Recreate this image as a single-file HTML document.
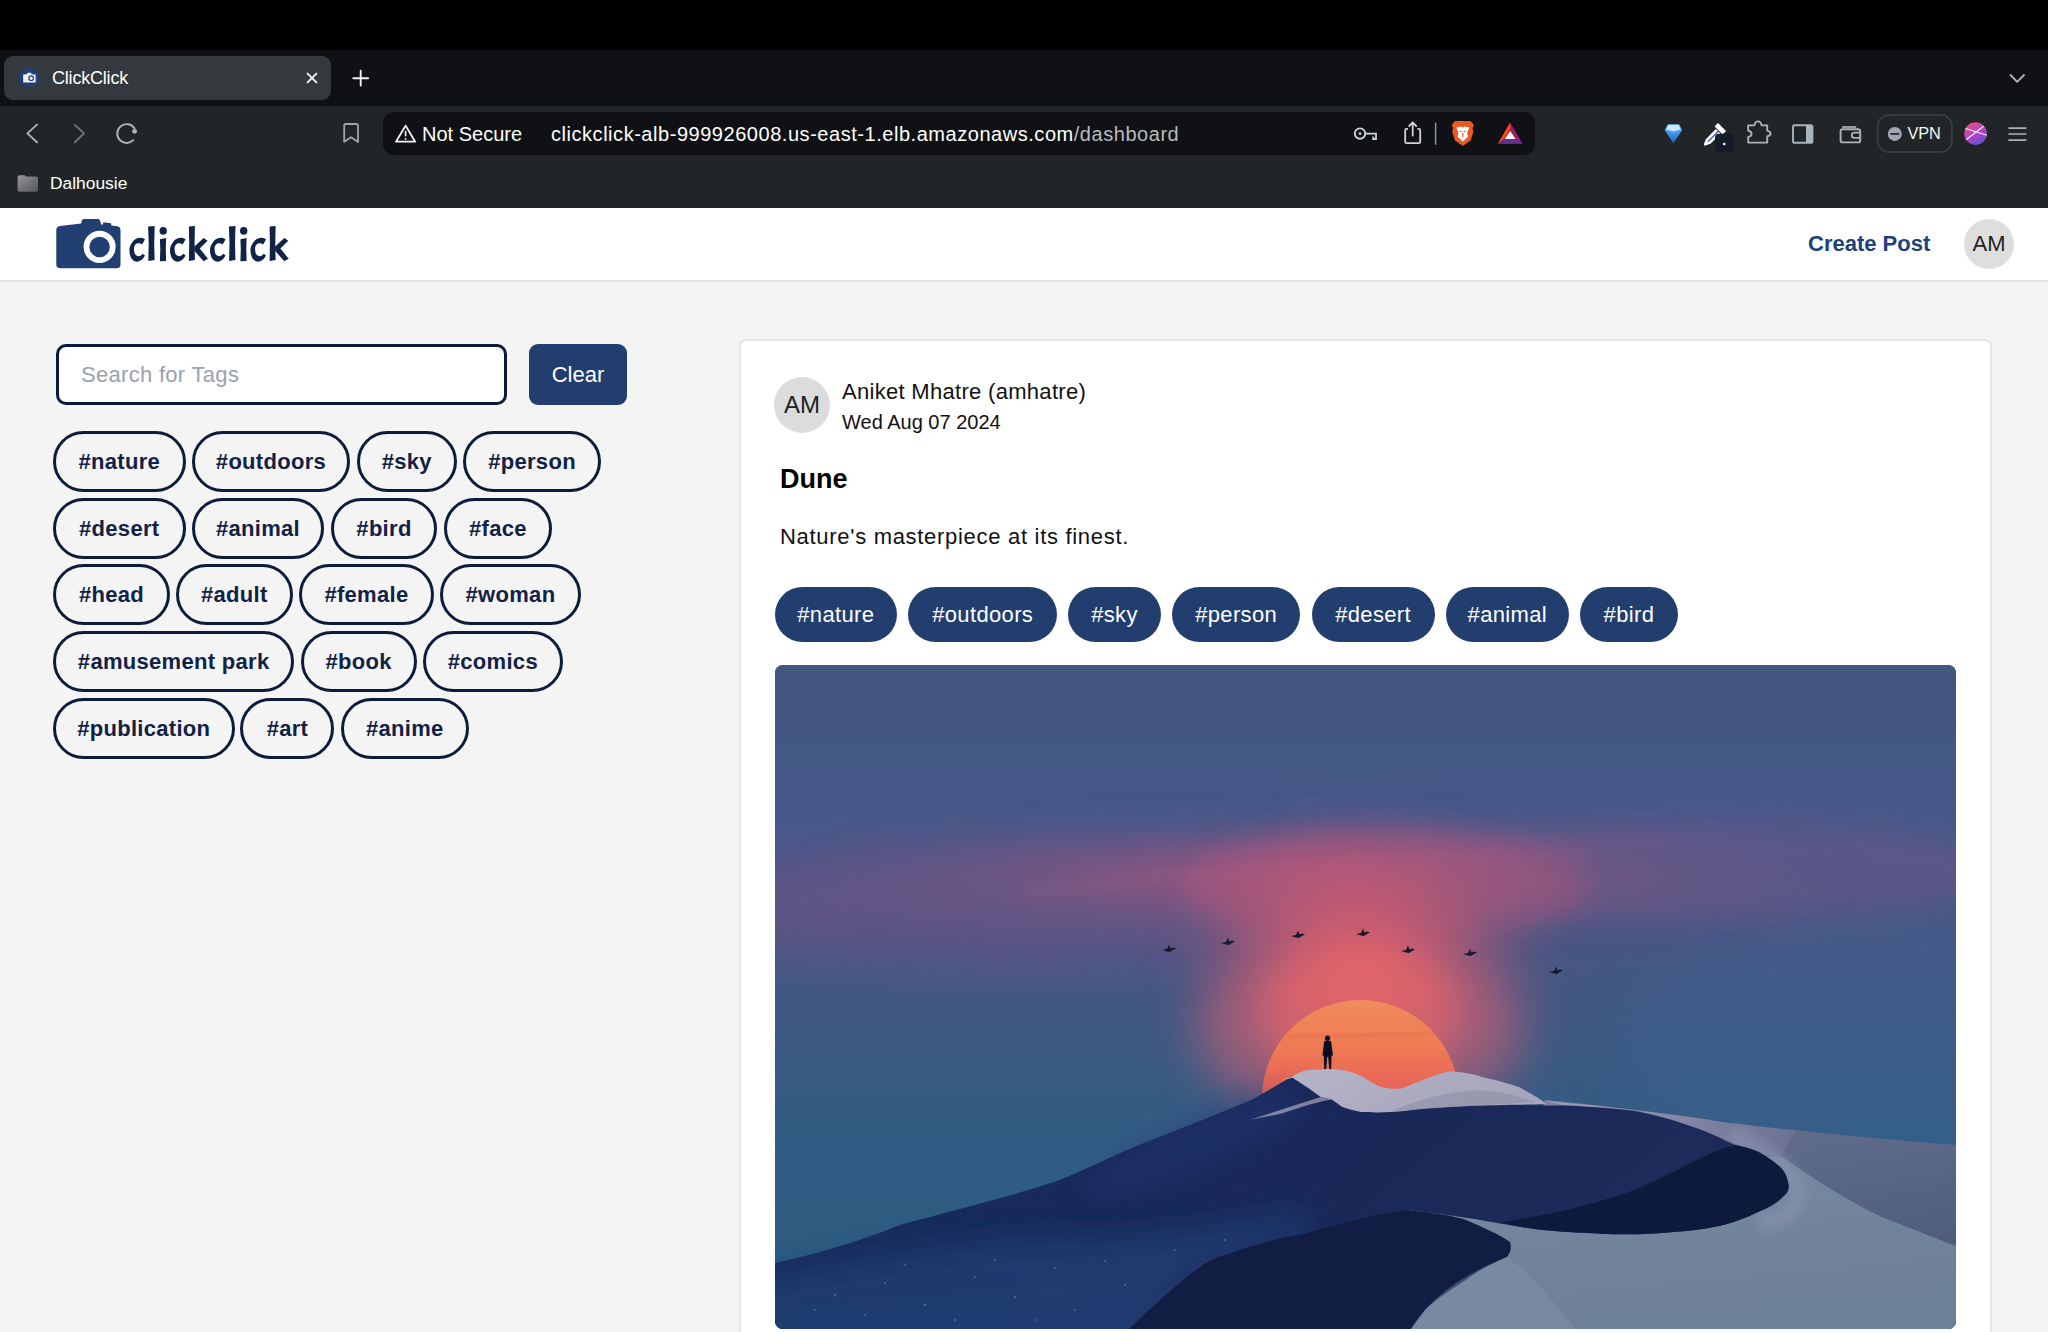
<!DOCTYPE html>
<html><head><meta charset="utf-8">
<style>
*{box-sizing:border-box;margin:0;padding:0}
html,body{width:2048px;height:1332px;overflow:hidden;background:#f4f4f4;font-family:"Liberation Sans",sans-serif}
.a{position:absolute}
#topblack{left:0;top:0;width:2048px;height:50px;background:#000}
#tabbar{left:0;top:50px;width:2048px;height:56px;background:#0f1115}
#tab{left:4px;top:56px;width:327px;height:44px;border-radius:9px;background:#33393c}
#toolbar{left:0;top:106px;width:2048px;height:102px;background:#212528}
#urlbar{left:383px;top:112px;width:1152px;height:43px;border-radius:11px;background:#0f1115}
.wt{color:#fff;white-space:pre}
#header{left:0;top:208px;width:2048px;height:72px;background:#fff}
#hborder{left:0;top:280px;width:2048px;height:2px;background:#e4e5e9}
.pill{position:absolute;height:61px;border:3px solid #0d1c3b;border-radius:31px;color:#112246;font-weight:bold;font-size:22px;line-height:55px;text-align:center;white-space:pre;letter-spacing:0.3px}
.ptag{position:absolute;top:587px;height:55px;border-radius:28px;background:#213e6f;color:#fff;font-size:22px;line-height:55px;text-align:center;white-space:pre;letter-spacing:0.35px}
</style></head><body>
<div class="a" id="topblack"></div>
<div class="a" id="tabbar"></div>
<div class="a" id="tab"></div>
<div class="a" id="toolbar"></div>
<div class="a" id="urlbar"></div>
<div class="a wt" style="left:52px;top:67px;font-size:18px;line-height:22px;letter-spacing:-0.2px">ClickClick</div>
<!-- url text -->
<div class="a wt" style="left:422px;top:123px;font-size:20px;line-height:23px;">Not Secure</div>
<div class="a wt" style="left:551px;top:123px;font-size:20px;line-height:23px;letter-spacing:0.54px">clickclick-alb-999926008.us-east-1.elb.amazonaws.com<span style="color:#b9bbbe">/dashboard</span></div>
<svg class="a" style="left:0;top:0" width="2048" height="208" viewBox="0 0 2048 208">
<defs>
<linearGradient id="fold" x1="0" y1="0" x2="1" y2="1"><stop offset="0" stop-color="#9a9a9e"/><stop offset="0.6" stop-color="#6e6e72"/><stop offset="1" stop-color="#58585c"/></linearGradient>
<linearGradient id="globe" x1="0.2" y1="0" x2="0.8" y2="1"><stop offset="0" stop-color="#ee4f7a"/><stop offset="0.5" stop-color="#b444c4"/><stop offset="1" stop-color="#5a52dc"/></linearGradient>
<linearGradient id="dia" x1="0" y1="0" x2="0" y2="1"><stop offset="0" stop-color="#6cc4ff"/><stop offset="1" stop-color="#1a5fd0"/></linearGradient>
</defs>
<!-- favicon -->
<circle cx="29.4" cy="77.8" r="10" fill="#213f74"/>
<path d="M23.2,74.5 L27,74.2 L27.6,72.8 L31,72.8 L31.6,74.2 L35.6,74.4 L35.6,82.6 L23.2,82.6 Z" fill="#eef2f6"/>
<circle cx="31.2" cy="78.2" r="2.3" fill="none" stroke="#213f74" stroke-width="1.2"/>
<!-- close x -->
<path d="M307.6,73.6 L316.4,82.4 M316.4,73.6 L307.6,82.4" stroke="#f2f2f2" stroke-width="1.9" stroke-linecap="round"/>
<!-- plus -->
<path d="M360.7,70.8 L360.7,85.6 M353.3,78.2 L368.1,78.2" stroke="#f2f2f2" stroke-width="1.9" stroke-linecap="round"/>
<!-- dropdown chevron -->
<path d="M2010.5,75 L2017.2,81.8 L2024,75" stroke="#aab4bc" stroke-width="1.9" fill="none" stroke-linecap="round" stroke-linejoin="round"/>
<!-- back / forward / reload -->
<path d="M37,124.6 L27.4,133.4 L37,142.3" stroke="#a9b3bb" stroke-width="1.9" fill="none" stroke-linecap="round" stroke-linejoin="round"/>
<path d="M74.8,124.9 L84,133.4 L74.8,142.3" stroke="#6d777f" stroke-width="1.9" fill="none" stroke-linecap="round" stroke-linejoin="round"/>
<path d="M133.3,140.2 A9.4,9.4 0 1,1 134.6,128.5" stroke="#a9b3bb" stroke-width="1.9" fill="none" stroke-linecap="round"/>
<circle cx="134.6" cy="131.3" r="2.4" fill="#a9b3bb"/>
<!-- bookmark -->
<path d="M344.2,141.8 L344.2,125.6 Q344.2,124 345.8,124 L356.4,124 Q358,124 358,125.6 L358,142 L351.1,137.2 Z" stroke="#9ba5ad" stroke-width="1.8" fill="none" stroke-linejoin="round"/>
<!-- warning triangle -->
<path d="M405.6,125.6 L415.2,141.7 L396,141.7 Z" stroke="#f4f4f4" stroke-width="1.8" fill="none" stroke-linejoin="round"/>
<path d="M405.6,131 L405.6,136.4" stroke="#f4f4f4" stroke-width="1.6"/>
<circle cx="405.6" cy="139" r="0.9" fill="#f4f4f4"/>
<!-- key -->
<circle cx="1360" cy="133.6" r="5.2" stroke="#cfd3d6" stroke-width="1.9" fill="none"/>
<circle cx="1360" cy="133.6" r="1.4" fill="#cfd3d6"/>
<path d="M1365.2,133.6 L1376,133.6 L1376,139 L1373.2,139 L1373.2,136.4" stroke="#cfd3d6" stroke-width="1.8" fill="none"/>
<!-- share -->
<path d="M1408,128.8 L1406.6,128.8 Q1405.2,128.8 1405.2,130.2 L1405.2,141.8 Q1405.2,143.2 1406.6,143.2 L1418.8,143.2 Q1420.2,143.2 1420.2,141.8 L1420.2,130.2 Q1420.2,128.8 1418.8,128.8 L1417.4,128.8" stroke="#cfd3d6" stroke-width="1.8" fill="none"/>
<path d="M1412.7,135.6 L1412.7,122.6 M1409.2,126 L1412.7,122.4 L1416.2,126" stroke="#cfd3d6" stroke-width="1.8" fill="none" stroke-linecap="round" stroke-linejoin="round"/>
<path d="M1435.6,122.6 L1435.6,144.8" stroke="#8e969c" stroke-width="1.5"/>
<!-- brave lion -->
<path d="M1455,121 L1470.6,121 L1473.8,124.8 L1472.6,128.2 L1473.4,131.8 L1470.6,140.6 L1462.8,146 L1455,140.6 L1452.2,131.8 L1453,128.2 L1451.8,124.8 Z" fill="#e65a25"/>
<path d="M1456.4,127.6 L1460.6,126.4 L1462.8,127.6 L1465,126.4 L1469.2,127.6 L1467,133.2 L1468,136.8 L1462.8,141.4 L1457.6,136.8 L1458.6,133.2 Z" fill="#ffffff"/>
<path d="M1459.8,131.2 L1461.8,131.8 M1465.8,131.2 L1463.8,131.8 M1462.8,133 L1462.8,137" stroke="#e65a25" stroke-width="1.2"/>
<!-- BAT triangle -->
<path d="M1510.2,122.4 L1522.6,143.7 L1497.9,143.7 Z" fill="#9e1f63"/>
<path d="M1510.2,122.4 L1497.9,143.7 L1504.5,138.5 L1510.2,128 Z" fill="#ff5000"/>
<path d="M1497.9,143.7 L1522.6,143.7 L1516.5,138.8 L1503.8,138.8 Z" fill="#662d91"/>
<path d="M1510.2,131 L1515.5,139 L1504.9,139 Z" fill="#ffffff"/>
<!-- diamond -->
<path d="M1668,124.2 L1679,124.2 L1682.2,130 L1673.4,143.2 L1664.6,130 Z" fill="url(#dia)"/>
<path d="M1668.4,125 L1678.6,125 L1680.5,129.5 L1673.4,131.5 L1666.4,129.5 Z" fill="#dff2ff" opacity="0.85"/>
<!-- eyedropper -->
<path d="M1718,123 L1726,131 L1722.6,134.4 L1714.6,126.4 Z" fill="#ffffff"/>
<path d="M1716.8,130 L1707,139.8 L1705.2,144.4 L1709.8,142.6 L1719.6,132.8" stroke="#ffffff" stroke-width="2.6" fill="#3d5bd6" stroke-linejoin="round"/>
<rect x="1715" y="133.8" width="19.3" height="18.7" rx="4" fill="#151a28"/>
<circle cx="1724.2" cy="144" r="1.3" fill="#ffffff"/>
<!-- puzzle -->
<path d="M1748.2,125.4 L1754.4,125.4 Q1755.2,121.4 1758,121.4 Q1760.8,121.4 1761.6,125.4 L1767.2,125.4 L1767.2,130.6 Q1770.6,131.6 1770.6,133.6 Q1770.6,135.6 1767.2,136.4 L1767.2,142.6 L1748.2,142.6 L1748.2,137.2 Q1751.6,136.2 1751.6,133.8 Q1751.6,131.4 1748.2,130.6 Z" stroke="#a9b3bb" stroke-width="1.9" fill="none" stroke-linejoin="round"/>
<!-- sidebar -->
<rect x="1793" y="125.2" width="19.4" height="17.6" rx="1.6" stroke="#a9b3bb" stroke-width="1.9" fill="none"/>
<rect x="1806" y="125.2" width="6.4" height="17.6" fill="#a9b3bb"/>
<!-- wallet -->
<path d="M1842,127 L1856.2,127" stroke="#a9b3bb" stroke-width="1.7"/>
<rect x="1840.6" y="129.2" width="19.6" height="13.2" rx="2" stroke="#a9b3bb" stroke-width="1.9" fill="none"/>
<path d="M1860.2,132.6 L1854.2,132.6 Q1851.8,132.6 1851.8,135.2 Q1851.8,137.8 1854.2,137.8 L1860.2,137.8" stroke="#a9b3bb" stroke-width="1.8" fill="none"/>
<!-- VPN pill -->
<rect x="1877.7" y="115" width="74.2" height="37" rx="11" stroke="#3b4347" stroke-width="1.5" fill="none"/>
<circle cx="1894.8" cy="133.9" r="7" fill="#a4a6b6"/>
<path d="M1891.2,133.9 L1898.4,133.9" stroke="#23272e" stroke-width="1.9" stroke-linecap="round"/>
<text x="1907.4" y="139.2" font-family="Liberation Sans" font-size="16.3" fill="#f5f5f5">VPN</text>
<!-- globe -->
<circle cx="1975.6" cy="133.6" r="11.3" fill="url(#globe)"/>
<path d="M1965.4,128.4 L1987,135.2 M1966,139.8 L1983.6,126.2" stroke="#ffffff" stroke-width="1.1" opacity="0.9"/>
<!-- menu -->
<path d="M2008.4,128.2 L2026.4,128.2 M2008.4,134 L2026.4,134 M2008.4,140.2 L2026.4,140.2" stroke="#a9b3bb" stroke-width="1.7"/>
<!-- folder -->
<path d="M17.6,177.4 Q17.6,175.2 19.6,175.2 L24.6,175.2 L26,176.4 L36.2,176.4 Q38,176.4 38,178.2 L38,190 Q38,191.8 36.2,191.8 L19.4,191.8 Q17.6,191.8 17.6,190 Z" fill="url(#fold)"/>
</svg>
<!-- bookmarks -->
<div class="a wt" style="left:50px;top:173px;font-size:17.4px;line-height:21px;">Dalhousie</div>

<!-- page header -->
<div class="a" id="header"></div>
<div class="a" id="hborder"></div>
<svg class="a" style="left:0;top:208px" width="320" height="72" viewBox="0 208 320 72">
<path d="M60,226 L81.2,223.6 L81.6,221.3 Q82,219 84.4,219 L98.4,219 Q99.5,219 100,220.8 L101.2,224.6 L103,224.6 L103.3,222.2 L111,223.2 L111.4,225.5 L117,226.3 Q120.5,226.8 120.5,230 L120.5,264.5 Q120.5,268.3 116.5,268.3 L60.3,268.3 Q56.3,268.3 56.3,264.5 L56.3,230 Q56.3,226.4 60,226 Z" fill="#213f73"/>
<circle cx="99.6" cy="246.9" r="13.15" stroke="#ffffff" stroke-width="5.8" fill="none"/>
<defs>
<path id="gc" d="M15.8,1.7 C13.5,0.5 12,0.1 10.7,0.2 C7,0.5 4.5,2.5 3.3,4.4 C1,7.5 0.2,10 0.2,12.7 C0.2,16 1,19 2.4,21.1 C4,23 6,24.1 7.7,24.1 C9.5,24.1 11,23.3 12.5,22.2 C14,21 15,19.5 15.8,18 L13.4,16.2 C12,17.8 10.8,18.6 9.4,18.6 C7.5,18.6 6.2,17.3 5.5,15.8 C5,14.5 4.8,13 4.8,11.4 C4.8,9.5 5.4,8 6.3,7 C7,6.1 8,5.7 9,5.7 C10.5,5.7 11.8,6.3 12.9,6.8 Z"/>
<path id="gl" d="M0,0.7 L6.6,0 L6.1,17 L6.5,34.1 L0.2,35 L0.6,17 Z"/>
<g id="gi"><path d="M0,1.3 L6.2,0 L5.9,11 L6.2,22.9 L0,23.3 L0.4,11 Z"/><ellipse cx="3.3" cy="-7.2" rx="3.7" ry="3.9"/></g>
<g id="gk"><path d="M0,0.7 L6,0 L5.7,17 L6,34.1 L0,35 L0.3,17 Z"/><path d="M5.5,20.5 L14.7,12.1 L18.7,14.8 L10.8,22.7 L19.1,32.8 L14.7,35.4 L5.5,24.9 Z"/></g>
</defs>
<g fill="#112447">
<use href="#gc" x="129.2" y="237.6"/>
<use href="#gl" x="148.1" y="225.9"/>
<use href="#gi" x="159.9" y="238"/>
<use href="#gc" x="169.8" y="237.6"/>
<use href="#gk" x="188.9" y="225.9"/>
<use href="#gc" x="209.8" y="237.6"/>
<use href="#gl" x="228.9" y="225.9"/>
<use href="#gi" x="240.4" y="238"/>
<use href="#gc" x="250.3" y="237.6"/>
<use href="#gk" x="269.6" y="225.9"/>
</g>
</svg>
<div class="a" style="left:1808px;top:231px;font-size:22px;font-weight:bold;color:#1f4178;line-height:26px;white-space:pre">Create Post</div>
<div class="a" style="left:1964px;top:219px;width:50px;height:50px;border-radius:50%;background:#dedede;color:#222;font-size:22px;line-height:50px;text-align:center">AM</div>

<!-- search -->
<div class="a" style="left:56px;top:344px;width:451px;height:61px;border:3px solid #0c1a38;border-radius:10px;background:#fff"></div>
<div class="a" style="left:81px;top:362px;font-size:22px;line-height:26px;color:#9aa1ae;white-space:pre;letter-spacing:0.3px">Search for Tags</div>
<div class="a" style="left:529px;top:344px;width:98px;height:61px;border-radius:9px;background:#213e6f;color:#fff;font-size:22px;line-height:61px;text-align:center">Clear</div>

<!-- sidebar tags -->
<div class="pill" style="left:53px;top:431px;width:132.5px">#nature</div>
<div class="pill" style="left:191.7px;top:431px;width:158.6px">#outdoors</div>
<div class="pill" style="left:356.7px;top:431px;width:100.2px">#sky</div>
<div class="pill" style="left:463.3px;top:431px;width:137.5px">#person</div>

<div class="pill" style="left:53px;top:498px;width:132.5px">#desert</div>
<div class="pill" style="left:191.7px;top:498px;width:132.5px">#animal</div>
<div class="pill" style="left:331.1px;top:498px;width:105.8px">#bird</div>
<div class="pill" style="left:443.5px;top:498px;width:108.9px">#face</div>

<div class="pill" style="left:53px;top:564px;width:116.9px">#head</div>
<div class="pill" style="left:175.8px;top:564px;width:116.9px">#adult</div>
<div class="pill" style="left:298.8px;top:564px;width:135.3px">#female</div>
<div class="pill" style="left:440.2px;top:564px;width:140.6px">#woman</div>

<div class="pill" style="left:53px;top:631px;width:241.3px">#amusement park</div>
<div class="pill" style="left:300.5px;top:631px;width:116.1px">#book</div>
<div class="pill" style="left:423px;top:631px;width:139.7px">#comics</div>

<div class="pill" style="left:53px;top:698px;width:181.5px">#publication</div>
<div class="pill" style="left:240.4px;top:698px;width:94.1px">#art</div>
<div class="pill" style="left:340.9px;top:698px;width:127.7px">#anime</div>

<!-- post card -->
<div class="a" style="left:739px;top:339px;width:1253px;height:1100px;border:2px solid #e4e5e9;border-radius:7px;background:#fff"></div>
<div class="a" style="left:774px;top:377px;width:56px;height:56px;border-radius:50%;background:#dcdcdc;color:#222;font-size:24px;line-height:56px;text-align:center">AM</div>
<div class="a" style="left:842px;top:379px;font-size:22px;line-height:26px;color:#111;white-space:pre;letter-spacing:0.3px">Aniket Mhatre (amhatre)</div>
<div class="a" style="left:842px;top:411px;font-size:20px;line-height:23px;color:#111;white-space:pre">Wed Aug 07 2024</div>
<div class="a" style="left:780px;top:464px;font-size:27px;font-weight:bold;line-height:30px;color:#000;white-space:pre">Dune</div>
<div class="a" style="left:780px;top:524px;font-size:22px;line-height:26px;color:#111;white-space:pre;letter-spacing:0.7px">Nature's masterpiece at its finest.</div>

<div class="ptag" style="left:774.5px;width:122.6px">#nature</div>
<div class="ptag" style="left:908px;width:149.4px">#outdoors</div>
<div class="ptag" style="left:1068.4px;width:92.2px">#sky</div>
<div class="ptag" style="left:1172.1px;width:128.1px">#person</div>
<div class="ptag" style="left:1311.6px;width:123px">#desert</div>
<div class="ptag" style="left:1446px;width:122.6px">#animal</div>
<div class="ptag" style="left:1580px;width:97.9px">#bird</div>

<!-- image -->
<div class="a" id="img" style="left:775px;top:665px;width:1181px;height:664px;border-radius:8px;overflow:hidden;background:#3f5585"><svg width="1181" height="664" viewBox="0 0 1181 664" style="display:block">
<defs>
<linearGradient id="sky" x1="0" y1="0" x2="0" y2="1">
<stop offset="0" stop-color="#42567f"/>
<stop offset="0.25" stop-color="#45588a"/>
<stop offset="0.42" stop-color="#485683"/>
<stop offset="0.6" stop-color="#3a5a83"/>
<stop offset="0.75" stop-color="#305d83"/>
<stop offset="1" stop-color="#2a5a7e"/>
</linearGradient>
<radialGradient id="band" cx="0.5" cy="0.5" r="0.5">
<stop offset="0" stop-color="#b8567a" stop-opacity="0.95"/>
<stop offset="0.35" stop-color="#9a567c" stop-opacity="0.7"/>
<stop offset="0.7" stop-color="#705882" stop-opacity="0.4"/>
<stop offset="1" stop-color="#605882" stop-opacity="0"/>
</radialGradient>
<radialGradient id="col" cx="0.5" cy="0.5" r="0.5">
<stop offset="0" stop-color="#e8626a" stop-opacity="1"/>
<stop offset="0.5" stop-color="#cc5a70" stop-opacity="0.7"/>
<stop offset="1" stop-color="#a0567a" stop-opacity="0"/>
</radialGradient>
<linearGradient id="sun" x1="0" y1="0" x2="0" y2="1">
<stop offset="0" stop-color="#f08c5c"/>
<stop offset="0.22" stop-color="#ef7c52"/>
<stop offset="0.47" stop-color="#e8625a"/>
<stop offset="1" stop-color="#e8625a"/>
</linearGradient>
<linearGradient id="ridge" x1="0" y1="0" x2="1" y2="0.3">
<stop offset="0" stop-color="#b6b4c8"/>
<stop offset="1" stop-color="#a6a5bb"/>
</linearGradient>
<linearGradient id="bowl" x1="0" y1="0" x2="0.3" y2="1">
<stop offset="0" stop-color="#7a89a3"/>
<stop offset="1" stop-color="#6c8097"/>
</linearGradient>
<linearGradient id="farr" x1="0" y1="0" x2="0.35" y2="1">
<stop offset="0" stop-color="#8486a4"/>
<stop offset="0.3" stop-color="#626d8e"/>
<stop offset="1" stop-color="#4a5878"/>
</linearGradient>
<linearGradient id="dark" x1="0" y1="0" x2="1" y2="0.3">
<stop offset="0" stop-color="#173163"/>
<stop offset="0.45" stop-color="#182858"/>
<stop offset="1" stop-color="#1e2a5a"/>
</linearGradient>
<linearGradient id="tex" x1="0" y1="0" x2="0.3" y2="1">
<stop offset="0" stop-color="#1c3768"/>
<stop offset="1" stop-color="#24437a"/>
</linearGradient>
<filter id="b4" x="-50%" y="-50%" width="200%" height="200%"><feGaussianBlur stdDeviation="4"/></filter>
<filter id="b6" x="-50%" y="-50%" width="200%" height="200%"><feGaussianBlur stdDeviation="6"/></filter>
<filter id="b14" x="-50%" y="-50%" width="200%" height="200%"><feGaussianBlur stdDeviation="14"/></filter>
<filter id="b25" x="-50%" y="-50%" width="200%" height="200%"><feGaussianBlur stdDeviation="25"/></filter>
</defs>
<rect width="1181" height="664" fill="url(#sky)"/>
<ellipse cx="1100" cy="390" rx="260" ry="140" fill="#3a6494" opacity="0.3" filter="url(#b25)"/>
<!-- pink band -->
<ellipse cx="250" cy="236" rx="360" ry="58" fill="#6a5486" opacity="0.72" filter="url(#b25)"/>
<ellipse cx="930" cy="205" rx="300" ry="55" fill="#725888" opacity="0.45" filter="url(#b14)"/>
<ellipse cx="540" cy="212" rx="560" ry="66" fill="url(#band)" opacity="0.85" filter="url(#b14)"/>
<ellipse cx="610" cy="222" rx="200" ry="58" fill="#b4567a" opacity="0.4" filter="url(#b14)"/>
<path d="M250,228 C400,208 600,193 820,188" stroke="#b8688c" stroke-width="10" fill="none" opacity="0.16" filter="url(#b6)"/>
<path d="M420,190 C550,177 700,172 900,177" stroke="#9a5e8a" stroke-width="8" fill="none" opacity="0.18" filter="url(#b6)"/>
<!-- glow column -->
<ellipse cx="585" cy="305" rx="185" ry="160" fill="url(#col)" filter="url(#b25)"/>
<ellipse cx="585" cy="370" rx="165" ry="85" fill="#e46470" opacity="0.45" filter="url(#b25)"/>
<ellipse cx="585" cy="350" rx="95" ry="70" fill="#ee6a64" opacity="0.4" filter="url(#b14)"/>
<!-- sun -->
<clipPath id="sunclip"><rect x="0" y="0" width="1181" height="428"/></clipPath>
<circle cx="585.5" cy="433.5" r="98.5" fill="url(#sun)" clip-path="url(#sunclip)"/>
<clipPath id="sunc2"><circle cx="585.5" cy="433.5" r="98.5"/></clipPath>
<g clip-path="url(#sunc2)"><path d="M480,372 L690,368 M480,396 L690,396" stroke="#ea6c56" stroke-width="4" opacity="0.35"/><path d="M480,409 L690,409" stroke="#e46a60" stroke-width="2" opacity="0.35"/></g>
<!-- far right dune -->
<path d="M770,435 C850,443 920,452 949.6,457.5 C1030,466 1100,474 1181,480 L1181,664 L700,664 Z" fill="url(#farr)"/>
<!-- light bowl -->
<path d="M633,545 C700,540 760,530 820,520 C900,505 960,495 1006,491 C1040,515 1080,540 1107,552 C1140,565 1160,573 1181,581 L1181,664 L620,664 Z" fill="url(#bowl)"/>
<!-- lit strip on far dune top -->
<linearGradient id="strip" x1="0" y1="0" x2="1" y2="0"><stop offset="0" stop-color="#a4a2ba"/><stop offset="0.5" stop-color="#8a8aa8"/><stop offset="1" stop-color="#6e7494"/></linearGradient>
<path d="M770,436 C850,443 920,452 949.6,457.5 C980,461 1000,464 1020,466 C1015,475 1010,485 1006,491 L983,489 L949.6,474 L864,446 L792,441 Z" fill="url(#strip)" opacity="0.85"/>
<path d="M955,470 C985,482 1010,498 1022,520 C1030,538 1015,552 985,560" stroke="#8e96b2" stroke-width="16" fill="none" opacity="0.55" filter="url(#b6)"/>
<!-- main dark dune -->
<path d="M0,598 C60,585 100,570 128,559 C180,545 240,530 282,516 C310,505 335,492 359,482 C400,466 440,450 474,436 C490,428 505,418 517,411.4 L532,422 L546,432 L557,434.6 L566.5,441.5 L587,447 L614,447 L648.6,443.5 L696.4,440.8 L725,439.5 C760,440 780,440.6 792,440.6 C820,442 845,444 860,446 C880,450 895,454 905,457.5 C925,464 940,470 949.6,475.4 C965,482 975,486 983,491 C995,498 1001,502 1005.8,507 C1010,512 1013,516 1013.6,520.4 C1014,525 1012,529 1008,531.6 C1000,540 992,543 983,547 C970,553 960,557 949.6,559.7 C930,564 915,566 904.7,566.4 C880,569 860,569.3 837.3,569.3 C810,568 790,567 770,565.3 C750,563 735,560 725,558.5 C690,552 660,548 633,545 L633,664 L0,664 Z" fill="url(#dark)"/>
<!-- crescent shadow -->
<path d="M725,557.4 C750,553 775,549 792.4,545 C820,538 840,532 859.8,524.8 C880,516 900,506 916,497.9 C935,488 950,482 960.8,480 C970,482 977,484 983.3,486.7 C993,492 1000,497 1005.8,502.4 C1011,508 1013,514 1013.6,520.4 C1014,525 1012,529 1008,531.6 C1000,540 992,543 983,547 C970,553 960,557 949.6,559.7 C930,564 915,566 904.7,566.4 C880,569 860,569.3 837.3,569.3 C810,568 790,567 770,565.3 C750,563 735,560 725,557.4 Z" fill="#0e1a3c"/>
<!-- lower-left textured area -->
<path d="M-40,618 L0,612 C50,602 100,592 128,588 C180,578 220,573 256,571 C300,569 340,568 372,568 C400,564 425,561 449,558 C480,554 505,548 525,546 L540,566 C500,581 470,591 436,601 C410,616 380,646 354,690 L-40,690 Z" fill="url(#tex)" opacity="0.85" filter="url(#b14)"/>
<ellipse cx="420" cy="480" rx="120" ry="22" transform="rotate(-24 420 480)" fill="#26397a" opacity="0.5" filter="url(#b14)"/>
<g fill="#7a9ac8" opacity="0.45">
<circle cx="60" cy="630" r="1.2"/><circle cx="110" cy="618" r="1"/><circle cx="150" cy="640" r="1.3"/><circle cx="200" cy="612" r="1"/><circle cx="240" cy="632" r="1.2"/><circle cx="280" cy="603" r="1"/><circle cx="300" cy="645" r="1.1"/><circle cx="330" cy="596" r="1"/><circle cx="90" cy="650" r="1"/><circle cx="180" cy="655" r="1.2"/><circle cx="260" cy="655" r="1"/><circle cx="40" cy="645" r="1"/><circle cx="400" cy="585" r="1"/><circle cx="450" cy="575" r="1.1"/><circle cx="220" cy="595" r="1"/><circle cx="130" cy="600" r="1"/><circle cx="350" cy="620" r="1.1"/>
</g>
<!-- front dark dune -->
<path d="M354,664 C380,640 410,610 436,595 C470,583 500,573 525,570 C555,562 586,551 633,545 C660,548 680,551 691,555 C710,563 725,570 735,577 C737,584 735,588 732,592 C715,600 700,607 691,615 C675,625 660,635 650,645 C645,652 640,658 636,664 Z" fill="#121d44"/>
<!-- light streak at bowl left -->
<path d="M636,664 C650,640 680,612 732,592 C750,605 775,630 800,664 Z" fill="#8496ad" opacity="0.4"/>
<!-- light ridge -->
<path d="M505,415.5 L517.3,411.4 C525,407 530,405.3 532.3,405.3 C545,404 555,404 562.4,404.3 C575,406 582,409 587,411.4 C595,416 602,421 607.5,422.3 C615,424 620,424 625.3,423.7 C632,422 637,419 641.7,417.6 C655,412 668,407 676,406.6 C690,407 700,410 710,412.8 C725,416 735,419 744.3,422.3 C755,428 765,434 771.6,438.8 C740,440 720,440 696.4,440.8 C670,442 660,443 648.6,443.5 C630,446 620,447 614.4,447 C600,448 592,447 587,447 C575,445 570,443 566.5,441.5 C562,438 559,436 557,434.6 C552,433 548,432 546,432 C540,428 536,425 532.3,422.3 C525,418 520,414 517.3,412.8 Z" fill="url(#ridge)"/>
<path d="M546,432 C520,440 500,447 474,455 L505,449 C525,443 540,437 557,434.6 Z" fill="#9896b0" opacity="0.8"/>
<path d="M614,447 C640,436 660,430 690,426 C720,424 740,430 760,437 L696,441 C670,442 650,444 614,447 Z" fill="#8c8ca8" opacity="0.55"/>
<!-- person -->
<path d="M552.6,370.6 a2.7,2.7 0 1,1 -0.1,0 Z M549.2,376 L556,376 L558,390.5 L556.6,390.5 L556.2,404 L554.2,404 L553.2,392 L552.2,392 L551.2,404 L549.2,404 L548.8,390.5 L547.4,390.5 Z" fill="#0b0e20"/>
<!-- birds -->
<g fill="#141a30">
<path transform="translate(394,284)" d="M-7,1 L-2,0 L0,-4.5 L1.5,-0.5 L4,-1.5 L7,-0.5 L3,1.5 L1,3 L-2,2.5 Z"/>
<path transform="translate(453,277)" d="M-7,1 L-2,0 L0,-4.5 L1.5,-0.5 L4,-1.5 L7,-0.5 L3,1.5 L1,3 L-2,2.5 Z"/>
<path transform="translate(523,270)" d="M-7,1 L-2,0 L0,-4.5 L1.5,-0.5 L4,-1.5 L7,-0.5 L3,1.5 L1,3 L-2,2.5 Z"/>
<path transform="translate(588,268)" d="M-7,1 L-2,0 L0,-4.5 L1.5,-0.5 L4,-1.5 L7,-0.5 L3,1.5 L1,3 L-2,2.5 Z"/>
<path transform="translate(633,285)" d="M-7,1 L-2,0 L0,-4.5 L1.5,-0.5 L4,-1.5 L7,-0.5 L3,1.5 L1,3 L-2,2.5 Z"/>
<path transform="translate(695,288)" d="M-7,1 L-2,0 L0,-4.5 L1.5,-0.5 L4,-1.5 L7,-0.5 L3,1.5 L1,3 L-2,2.5 Z"/>
<path transform="translate(781,306)" d="M-7,1 L-2,0 L0,-4.5 L1.5,-0.5 L4,-1.5 L7,-0.5 L3,1.5 L1,3 L-2,2.5 Z"/>
</g>
</svg></div>
</body></html>
